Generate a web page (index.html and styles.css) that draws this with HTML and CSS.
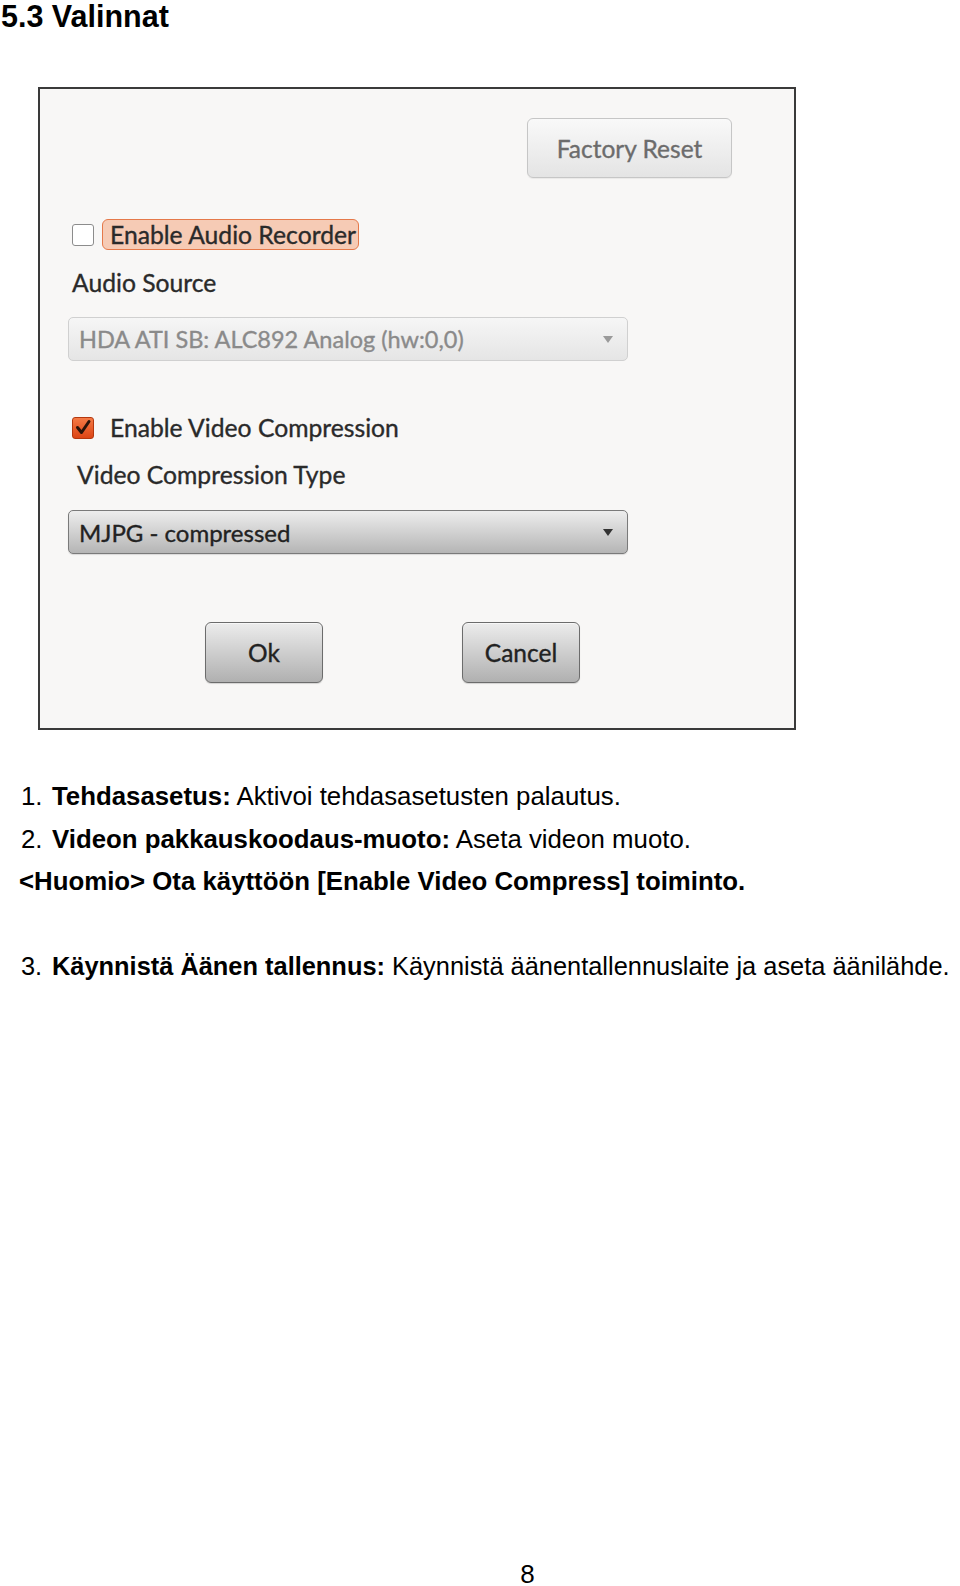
FILE: index.html
```html
<!DOCTYPE html>
<html lang="fi">
<head>
    <meta charset="UTF-8">
    <meta name="viewport" content="width=device-width, initial-scale=1.0">
    <title>5.3 Valinnat</title>
    <link rel="stylesheet" href="styles.css">
</head>
<body>
    <h1 class="title">5.3 Valinnat</h1>

    <!-- Options dialog -->
    <div class="dialog">
        <div class="dialog-top">
            <button class="btn btn-light">Factory Reset</button>
        </div>

        <div class="check-row check-row-audio">
            <span class="checkbox"></span>
            <span class="check-label focused">Enable Audio Recorder</span>
        </div>
        <div class="field-label">Audio Source</div>
        <div class="combo combo-disabled">
            <span>HDA ATI SB: ALC892 Analog (hw:0,0)</span>
            <span class="arrow"></span>
        </div>

        <div class="check-row check-row-video">
            <span class="checkbox checked">
                <svg width="22" height="22" viewBox="0 0 22 22"><path d="M5.5 10.5 L9.5 15.5 L17 4.5" fill="none" stroke="#2a140a" stroke-width="3" stroke-linejoin="round" stroke-linecap="round"/></svg>
            </span>
            <span class="check-label">Enable Video Compression</span>
        </div>
        <div class="field-label field-label-video">Video Compression Type</div>
        <div class="combo combo-video">
            <span>MJPG - compressed</span>
            <span class="arrow"></span>
        </div>

        <div class="dialog-buttons">
            <button class="btn btn-dark">Ok</button>
            <button class="btn btn-dark">Cancel</button>
        </div>
    </div>

    <!-- Description -->
    <div class="notes">
        <div class="item"><span class="num">1.</span><span><b>Tehdasasetus:</b> Aktivoi tehdasasetusten palautus.</span></div>
        <div class="item"><span class="num">2.</span><span><b>Videon pakkauskoodaus-muoto:</b> Aseta videon muoto.</span></div>
        <div class="item note"><b>&lt;Huomio&gt; Ota käyttöön [Enable Video Compress] toiminto.</b></div>
        <div class="item item-gap"><span class="num">3.</span><span><b>Käynnistä Äänen tallennus:</b> Käynnistä äänentallennuslaite ja aseta äänilähde.</span></div>
    </div>

    <div class="page-num">8</div>
</body>
</html>
```

FILE: styles.css
```css
    body {
        margin: 0;
        height: 1586px;
        overflow: hidden;
        display: flex;
        flex-direction: column;
        font-family: "Liberation Sans", Arial, sans-serif;
        background: #fff;
        color: #000;
    }
    .title {
        margin: 0;
        font-size: 30.5px;
        line-height: 32px;
        font-weight: bold;
        padding-left: 1px;
    }

    /* Dialog */
    .dialog {
        box-sizing: border-box;
        width: 758px;
        height: 643px;
        margin: 55px 0 0 38px;
        padding: 29px 0 0 28px;
        border: 2px solid #3a3a3a;
        background: #f8f7f6;
        font-family: Lato, "Open Sans", sans-serif;
        font-size: 24.7px;
        color: #2a2a2a;
        white-space: nowrap;
        -webkit-text-stroke: 0.35px currentColor;
    }
    .dialog-top {
        display: flex;
        justify-content: flex-end;
        padding-right: 62px;
    }
    .btn {
        box-sizing: border-box;
        font-family: inherit;
        font-size: 24.5px;
        border-radius: 6px;
        padding: 0;
        cursor: pointer;
        -webkit-text-stroke: 0.35px currentColor;
    }
    .btn-light {
        width: 205px;
        height: 60px;
        color: #6c6c6c;
        border: 1px solid #c6c6c6;
        background: linear-gradient(#f9f9f9, #e4e4e4);
        box-shadow: 0 1px 1px rgba(0, 0, 0, 0.06);
    }
    .btn-dark {
        width: 118px;
        height: 61px;
        color: #222;
        border: 1px solid #6c6c6c;
        background: linear-gradient(#ececec, #b0b0b0);
        box-shadow: inset 0 1px 0 rgba(255, 255, 255, 0.6), 0 1px 1px rgba(0, 0, 0, 0.15);
    }

    .check-row {
        display: flex;
        align-items: center;
        height: 31px;
        gap: 8px;
        padding-left: 4px;
    }
    .check-row-audio {
        margin-top: 41px;
    }
    .check-row-video {
        margin-top: 51px;
    }
    .checkbox {
        box-sizing: border-box;
        width: 22px;
        height: 22px;
        border: 1px solid #8c8c8c;
        border-radius: 3px;
        background: #fff;
        display: flex;
        flex-shrink: 0;
    }
    .checkbox.checked {
        border-color: #b4380e;
        background: linear-gradient(#f57a45, #dc4515);
    }
    .checkbox svg {
        margin: -1px;
    }
    .check-label {
        box-sizing: border-box;
        height: 31px;
        line-height: 29px;
        padding: 0 0 0 7px;
        border: 1px solid transparent;
        border-radius: 6px;
    }
    .check-label.focused {
        width: 257px;
        background: #f6cbb5;
        border-color: #e5794a;
    }

    .field-label {
        line-height: 30px;
        margin: 18px 0 0 4px;
    }
    .field-label-video {
        margin: 17px 0 0 9px;
    }

    .combo {
        box-sizing: border-box;
        width: 560px;
        height: 44px;
        margin-top: 19px;
        display: flex;
        align-items: center;
        justify-content: space-between;
        padding: 0 14px 0 10px;
        border-radius: 5px;
        border: 1px solid #7a7a7a;
        background: linear-gradient(#ededed, #b5b5b5);
        color: #222;
        font-size: 24px;
        box-shadow: 0 1px 1px rgba(0, 0, 0, 0.12);
    }
    .combo-disabled {
        border-color: #d0d0d0;
        background: linear-gradient(#f6f6f6, #e5e5e5);
        color: #8a8a8a;
        font-size: 23.5px;
        box-shadow: none;
    }
    .combo-video {
        margin-top: 20px;
    }
    .arrow {
        width: 0;
        height: 0;
        border-left: 5px solid transparent;
        border-right: 5px solid transparent;
        border-top: 7px solid #333;
    }
    .combo-disabled .arrow {
        border-top-color: #9a9a9a;
    }

    .dialog-buttons {
        display: flex;
        gap: 139px;
        margin: 68px 0 0 137px;
    }

    /* Notes below the dialog */
    .notes {
        margin-top: 45px;
        padding-left: 21px;
        font-size: 25.8px;
        line-height: 42.5px;
    }
    .item {
        display: flex;
    }
    .num {
        width: 31px;
        flex-shrink: 0;
    }
    .note {
        margin-left: -2px;
    }
    .item-gap {
        margin-top: 42.5px;
        white-space: nowrap;
        font-size: 25.4px;
    }

    .page-num {
        margin-top: auto;
        font-size: 26px;
        line-height: 24px;
        text-align: center;
        padding-left: 95px;
    }
```
